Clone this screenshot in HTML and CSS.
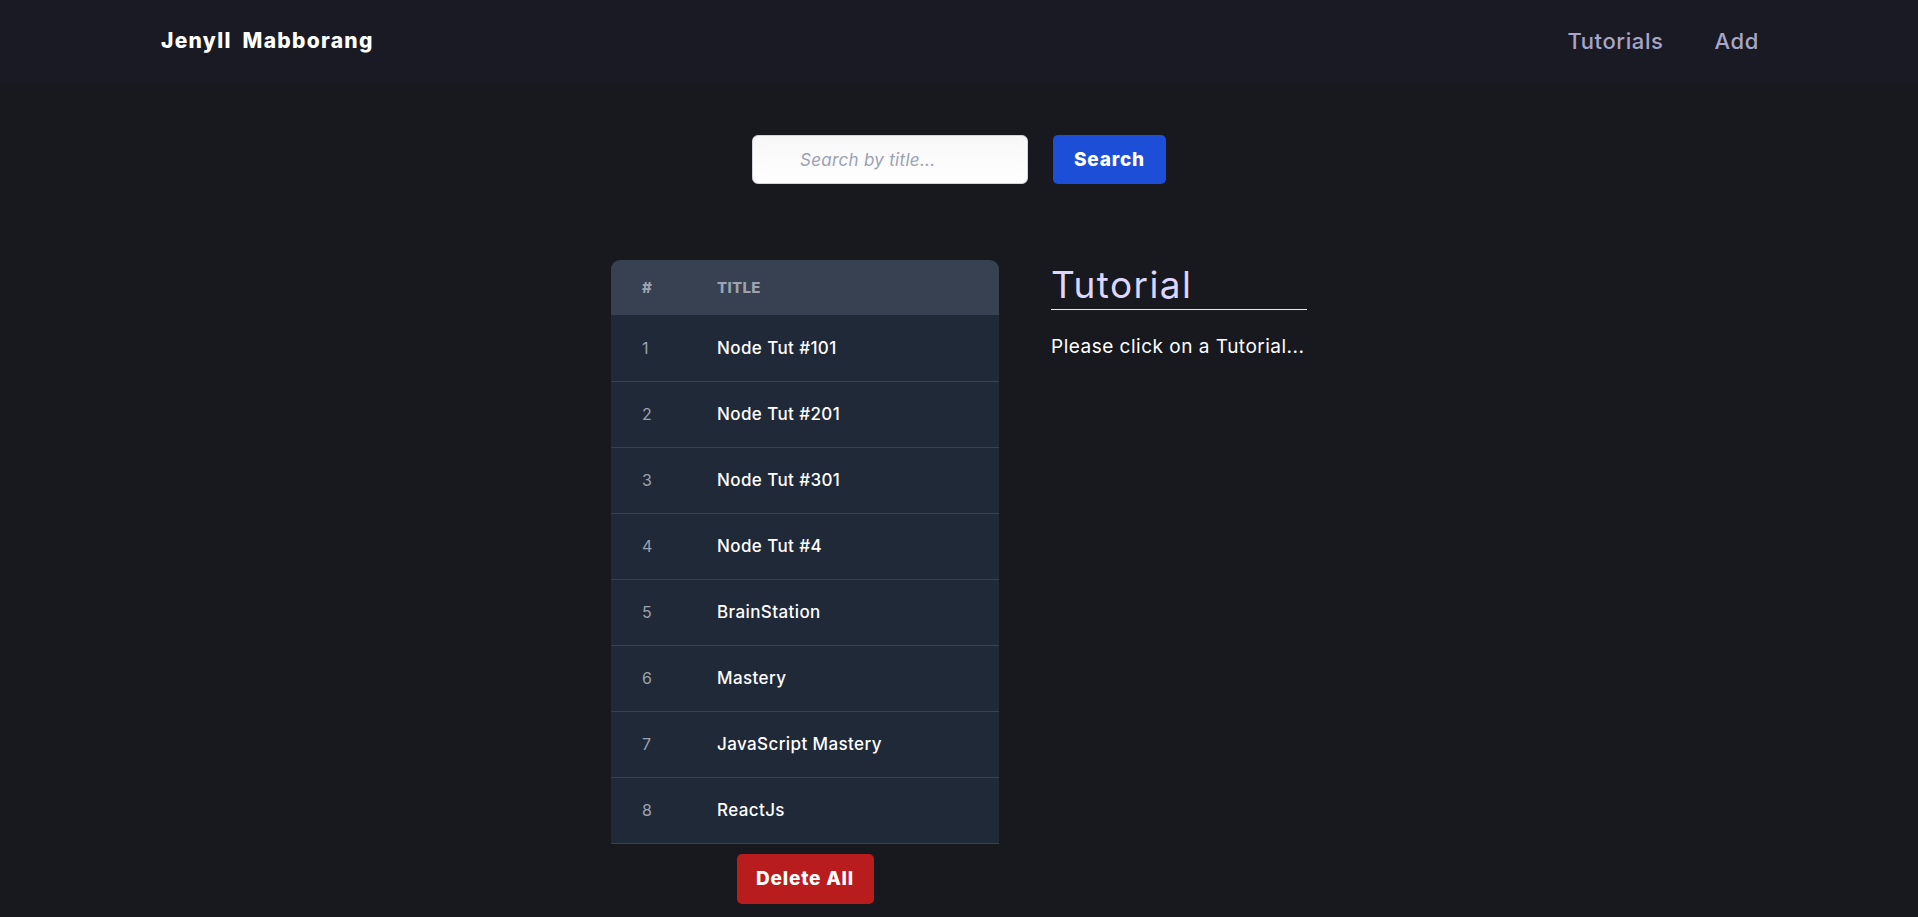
FILE: index.html
```html
<!DOCTYPE html>
<html lang="en">
<head>
<meta charset="utf-8">
<title>Tutorials</title>
<link rel="stylesheet" href="styles.css">
</head>
<body>
<nav class="navbar">
  <div class="nav-inner">
    <a class="brand" href="#">Jenyll Mabborang</a>
    <div class="nav-links">
      <a href="#">Tutorials</a>
      <a href="#">Add</a>
    </div>
  </div>
</nav>
<main class="main">
  <div class="search-row">
    <input class="search-input" type="text" placeholder="Search by title...">
    <button class="btn btn-search">Search</button>
  </div>
  <div class="content">
    <div class="list-col">
      <table class="tut-table">
        <thead>
          <tr><th class="c-num">#</th><th class="c-title">Title</th></tr>
        </thead>
        <tbody>
          <tr><td class="c-num">1</td><td class="c-title">Node Tut #101</td></tr>
          <tr><td class="c-num">2</td><td class="c-title">Node Tut #201</td></tr>
          <tr><td class="c-num">3</td><td class="c-title">Node Tut #301</td></tr>
          <tr><td class="c-num">4</td><td class="c-title">Node Tut #4</td></tr>
          <tr><td class="c-num">5</td><td class="c-title">BrainStation</td></tr>
          <tr><td class="c-num">6</td><td class="c-title">Mastery</td></tr>
          <tr><td class="c-num">7</td><td class="c-title">JavaScript Mastery</td></tr>
          <tr><td class="c-num">8</td><td class="c-title">ReactJs</td></tr>
        </tbody>
      </table>
      <button class="btn btn-delete">Delete All</button>
    </div>
    <div class="detail-col">
      <h2 class="detail-title">Tutorial</h2>
      <p class="detail-text">Please click on a Tutorial...</p>
    </div>
  </div>
</main>
</body>
</html>
```

FILE: styles.css
```css
* { box-sizing: border-box; }
html, body { margin: 0; padding: 0; }
body {
  background: #18181f;
  font-family: Inter, "Open Sans", "Liberation Sans", sans-serif;
  color: #ffffff;
  min-height: 917px;
}
a { text-decoration: none; }

.navbar {
  background: #1a1a24;
  height: 81px;
}
.nav-inner {
  width: 1600px;
  margin: 0 auto;
  height: 100%;
  display: flex;
  align-items: center;
  justify-content: space-between;
}
.brand {
  color: #ffffff;
  font-weight: 800;
  font-size: 21px;
  letter-spacing: 1.3px;
  word-spacing: 5px;
  padding-left: 2px;
}
.nav-links {
  display: flex;
  gap: 51px;
}
.nav-links a {
  color: #a8a5c5;
  font-size: 22px;
  font-weight: 500;
  letter-spacing: 0.6px;
}

.main {
  padding-top: 54px;
}
.search-row {
  display: flex;
  justify-content: center;
  gap: 25px;
}
.search-input {
  width: 276px;
  height: 49px;
  border: 1px solid #d1d5db;
  border-radius: 6px;
  background: linear-gradient(#f7f7f8, #ffffff);
  padding: 0 0 0 47px;
  font-family: inherit;
  font-size: 17px;
  letter-spacing: 0.3px;
  font-style: italic;
  color: #111827;
  outline: none;
}
.search-input::placeholder {
  color: #9aa1b3;
}
.btn {
  border: none;
  border-radius: 5px;
  color: #ffffff;
  font-family: inherit;
  font-weight: 800;
  font-size: 19px;
  letter-spacing: 0.8px;
  cursor: pointer;
}
.btn-search {
  width: 113px;
  height: 49px;
  background: #1d4ed8;
}

.content {
  margin-top: 76px;
  display: flex;
  justify-content: center;
  align-items: flex-start;
  gap: 52px;
}
.list-col {
  width: 388px;
  display: flex;
  flex-direction: column;
  align-items: center;
}
.tut-table {
  width: 100%;
  border-collapse: collapse;
  text-align: left;
}
.tut-table thead tr {
  background: #374151;
  height: 55px;
}
.tut-table th {
  color: #9ca3af;
  text-transform: uppercase;
  font-weight: 800;
  font-size: 15px;
  letter-spacing: 0.3px;
  padding: 0;
}
.tut-table th:first-child { border-top-left-radius: 9px; }
.tut-table th:last-child { border-top-right-radius: 9px; }
.tut-table tbody tr {
  background: #1f2937;
  height: 66px;
  border-bottom: 1px solid #374151;
}
.tut-table td { padding: 0; }
.c-num {
  width: 106px;
  padding-left: 31px !important;
}
.tut-table td.c-num {
  color: #9ca3af;
  font-size: 16px;
  font-weight: 400;
}
.tut-table td.c-title {
  color: #ffffff;
  font-size: 17px;
  font-weight: 500;
  letter-spacing: 0.4px;
}
.btn-delete {
  margin-top: 10px;
  width: 137px;
  height: 50px;
  background: #b91c1c;
}

.detail-col {
  width: 256px;
}
.detail-title {
  margin: 0;
  font-size: 37px;
  font-weight: 400;
  letter-spacing: 1.4px;
  color: #ddd6fe;
  line-height: 49px;
  border-bottom: 1px solid #e5e7eb;
}
.detail-text {
  margin: 24px 0 0;
  font-size: 19px;
  letter-spacing: 0.5px;
  line-height: 26px;
  color: #ffffff;
  white-space: nowrap;
}
```
